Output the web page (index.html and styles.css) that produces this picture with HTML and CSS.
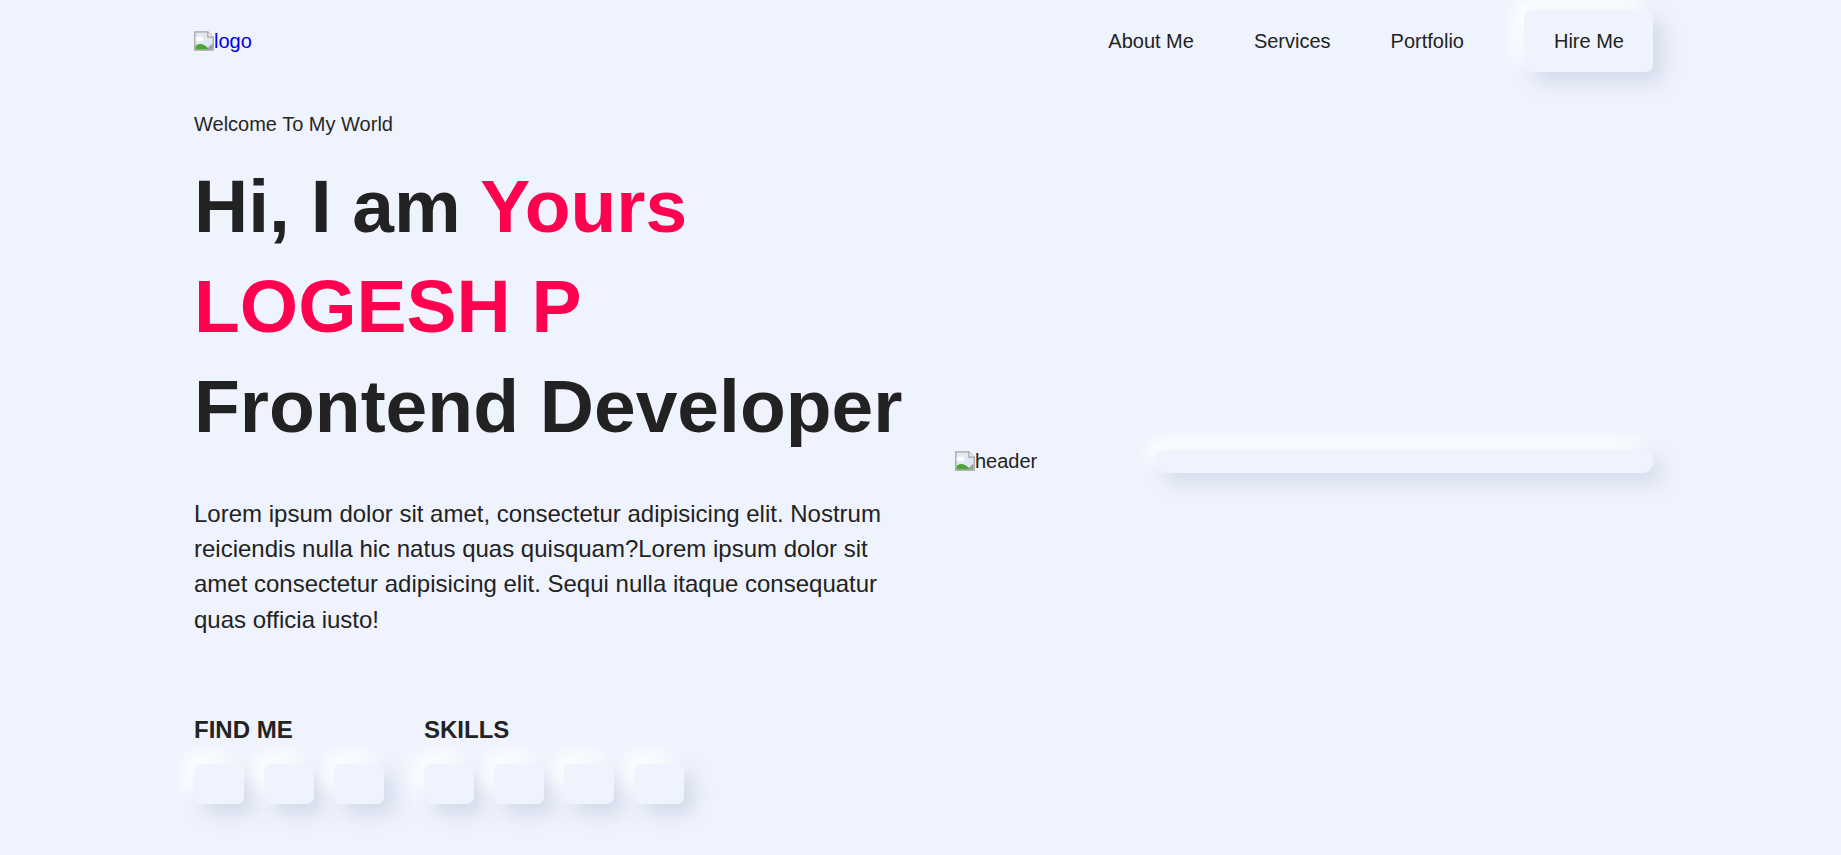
FILE: index.html
```html
<!DOCTYPE html>
<html lang="en">
<head>
<meta charset="utf-8">
<title>Logesh P - Frontend Developer</title>
<link rel="stylesheet" href="styles.css">
</head>
<body>
<div class="page">
  <header class="topbar">
    <a class="logo" href="#">
      <svg class="broken" viewBox="1 2 13 13" width="20" height="20" aria-hidden="true">
        <path d="M1.5 2.5 H10 L13.5 6 V14.5 H1.5 Z" fill="#dfe8f3" stroke="#a3a3a3" stroke-width="0.8"/>
        <path d="M10 2.5 V6 H13.5" fill="#f2f2f2" stroke="#a3a3a3" stroke-width="0.8"/>
        <ellipse cx="4.6" cy="7.2" rx="2.6" ry="1.6" fill="#ffffff"/>
        <path d="M2 14 V11.6 Q6 8.6 11 14 Z" fill="#4ea437"/>
        <path d="M9 14 L13 10.2 V14 Z" fill="#9a9a9a"/>
      </svg><span>logo</span>
    </a>
    <nav class="nav">
      <a class="nav-link" href="#">About Me</a>
      <a class="nav-link" href="#">Services</a>
      <a class="nav-link" href="#">Portfolio</a>
      <a class="hire" href="#">Hire Me</a>
    </nav>
  </header>

  <main class="hero">
    <div class="hero-text">
      <p class="welcome">Welcome To My World</p>
      <h1 class="title">Hi, I am <span class="accent">Yours</span><br><span class="accent">LOGESH P</span><br>Frontend Developer</h1>
      <p class="intro">Lorem ipsum dolor sit amet, consectetur adipisicing elit. Nostrum reiciendis nulla hic natus quas quisquam?Lorem ipsum dolor sit amet consectetur adipisicing elit. Sequi nulla itaque consequatur quas officia iusto!</p>
      <div class="links">
        <div class="group">
          <h4 class="group-title">FIND ME</h4>
          <div class="icons">
            <a class="icon-box" href="#"></a>
            <a class="icon-box" href="#"></a>
            <a class="icon-box" href="#"></a>
          </div>
        </div>
        <div class="group">
          <h4 class="group-title">SKILLS</h4>
          <div class="icons">
            <span class="icon-box"></span>
            <span class="icon-box"></span>
            <span class="icon-box"></span>
            <span class="icon-box"></span>
          </div>
        </div>
      </div>
    </div>

    <div class="hero-media">
      <span class="img-alt">
        <svg class="broken" viewBox="1 2 13 13" width="20" height="20" aria-hidden="true">
          <path d="M1.5 2.5 H10 L13.5 6 V14.5 H1.5 Z" fill="#dfe8f3" stroke="#a3a3a3" stroke-width="0.8"/>
          <path d="M10 2.5 V6 H13.5" fill="#f2f2f2" stroke="#a3a3a3" stroke-width="0.8"/>
          <ellipse cx="4.6" cy="7.2" rx="2.6" ry="1.6" fill="#ffffff"/>
          <path d="M2 14 V11.6 Q6 8.6 11 14 Z" fill="#4ea437"/>
          <path d="M9 14 L13 10.2 V14 Z" fill="#9a9a9a"/>
        </svg><span>header</span>
      </span>
      <div class="bar"></div>
    </div>
  </main>
</div>
</body>
</html>
```

FILE: styles.css
```css
* {
  box-sizing: border-box;
}

html, body {
  margin: 0;
  padding: 0;
}

body {
  background: #eff3fe;
  color: #222222;
  font-family: "Liberation Sans", Arial, sans-serif;
  font-size: 20px;
  height: 855px;
  overflow: hidden;
}

.page {
  padding: 0 188px 0 194px;
}

/* ---------- header ---------- */
.topbar {
  display: flex;
  justify-content: space-between;
  align-items: center;
  padding-top: 10px;
  height: 72px;
}

.logo {
  display: flex;
  align-items: center;
  color: #0000ee;
  text-decoration: none;
  font-size: 20px;
}

.broken {
  display: block;
  flex: none;
}

.nav {
  display: flex;
  align-items: center;
}

.nav-link {
  padding: 0 30px;
  color: #222222;
  text-decoration: none;
  font-size: 20px;
}

.hire {
  margin-left: 30px;
  padding: 0 29px 0 30px;
  height: 62px;
  line-height: 62px;
  border-radius: 7px;
  color: #222222;
  text-decoration: none;
  font-size: 20px;
  background: #eff3fe;
  box-shadow: 10px 10px 20px #d3d9e8, -10px -10px 20px #ffffff;
}

/* ---------- hero ---------- */
.hero {
  display: grid;
  grid-template-columns: 730px 1fr;
  align-items: center;
  margin-top: 41px;
}

.welcome {
  margin: 0;
  font-size: 20px;
  line-height: 22.4px;
  color: #262626;
}

.title {
  margin: 20.5px 0 0;
  font-size: 75px;
  line-height: 100px;
  font-weight: 700;
  color: #222222;
}

.accent {
  color: #ff014f;
}

.intro {
  margin: 40px 0 0;
  font-size: 24px;
  line-height: 35.2px;
  color: #222222;
}

.links {
  display: flex;
  gap: 40px;
  margin-top: 79px;
}

.group-title {
  margin: 0 0 21px;
  font-size: 24px;
  line-height: 27.6px;
  font-weight: 700;
  color: #222222;
}

.icons {
  display: flex;
  gap: 20px;
}

.icon-box {
  display: block;
  width: 50px;
  height: 40px;
  border-radius: 7px;
  background: #eff3fe;
  box-shadow: 10px 10px 20px #d3d9e8, -10px -10px 20px #ffffff;
}

.hero-media {
  display: flex;
  align-items: center;
  padding-left: 31px;
  padding-top: 5px;
}

.img-alt {
  display: flex;
  align-items: center;
  width: 200px;
  flex: none;
  font-size: 20px;
  color: #222222;
}

.bar {
  flex: 1;
  height: 23px;
  border-radius: 11px;
  background: #eff3fe;
  box-shadow: 10px 10px 20px #d3d9e8, -10px -10px 20px #ffffff;
}
```
